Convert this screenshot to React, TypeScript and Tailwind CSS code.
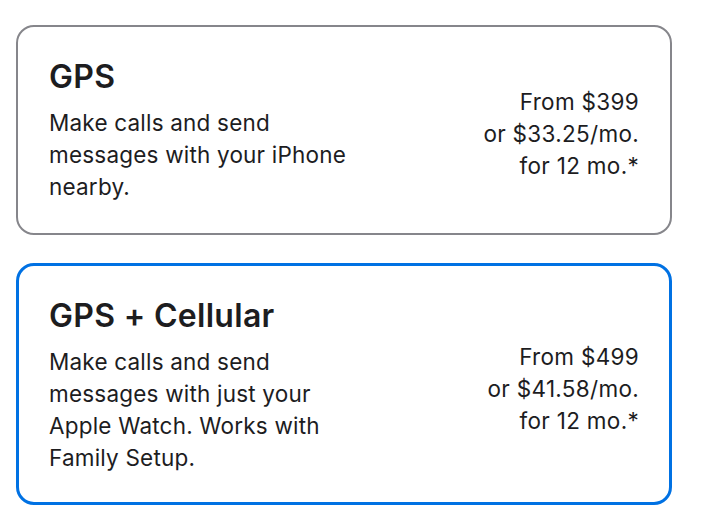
import React, { useState } from 'react';

type Model = {
    id: string;
    title: string;
    description: string;
    price: string;
    monthly: string;
};

const models: Model[] = [
    {
        id: 'gps',
        title: 'GPS',
        description: 'Make calls and send messages with your iPhone nearby.',
        price: 'From $399',
        monthly: 'or $33.25/mo.',
    },
    {
        id: 'cellular',
        title: 'GPS + Cellular',
        description:
            'Make calls and send messages with just your Apple Watch. Works with Family Setup.',
        price: 'From $499',
        monthly: 'or $41.58/mo.',
    },
];

function App() {
    const [selected, setSelected] = useState('cellular');

    return (
        <div
            className="min-h-screen bg-white text-[#1d1d1f] pt-[25px] pl-[16px] flex flex-col gap-[28px]"
            style={{ fontFamily: 'Inter, "Noto Sans", sans-serif' }}
        >
            {models.map((model) => {
                const active = model.id === selected;
                return (
                    <button
                        key={model.id}
                        onClick={() => setSelected(model.id)}
                        className={
                            active
                                ? 'w-[656px] text-left rounded-[18px] border-[3px] border-[#0071e3] pl-[30px] pr-[30px] pt-[32px] pb-[28px] flex items-center justify-between'
                                : 'w-[656px] text-left rounded-[18px] border-2 border-[#86868b] pl-[31px] pr-[31px] pt-[32px] pb-[30px] flex items-center justify-between'
                        }
                    >
                        <div className="w-[318px]">
                            <h2 className="text-[32px] leading-[36px] font-semibold tracking-[0.3px]">
                                {model.title}
                            </h2>
                            <p className="mt-[12px] text-[22.5px] leading-[32px] tracking-[0.2px]">
                                {model.description}
                            </p>
                        </div>
                        <div className="text-right text-[22.5px] leading-[32px] tracking-[0.3px] mt-[5px] whitespace-nowrap">
                            <p>{model.price}</p>
                            <p>{model.monthly}</p>
                            <p>for 12 mo.*</p>
                        </div>
                    </button>
                );
            })}
        </div>
    );
}

export default App;
